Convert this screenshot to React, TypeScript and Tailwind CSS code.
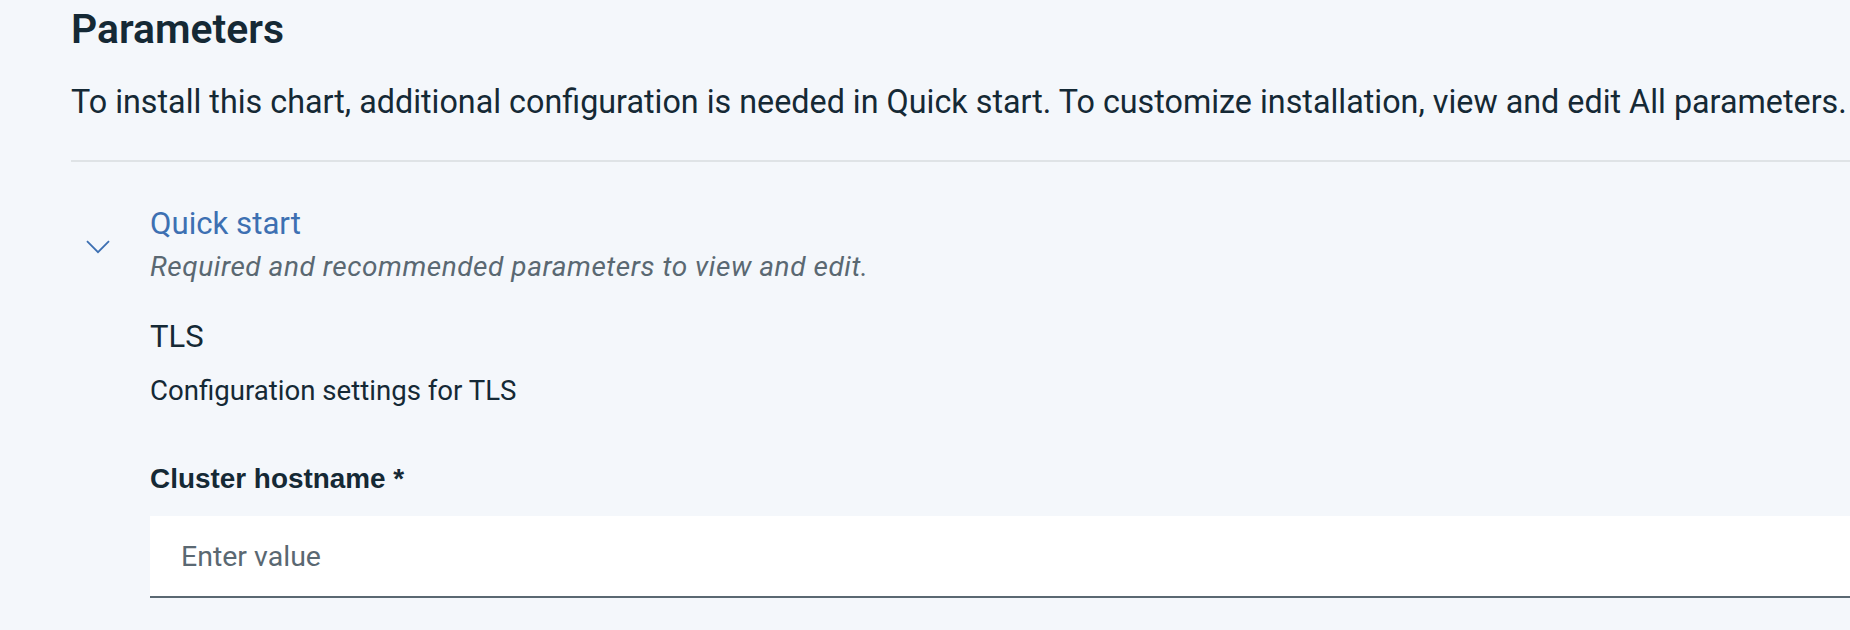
import React, { useState } from 'react';

const ChevronDown: React.FC<{ className?: string }> = ({ className }) => (
  <svg viewBox="0 0 24 14" width="24" height="14" fill="none" className={className}>
    <path d="M1 1.2 L12 12.2 L23 1.2" stroke="currentColor" strokeWidth="1.8" />
  </svg>
);

export default function App() {
  const [open, setOpen] = useState(true);
  const [hostname, setHostname] = useState('');

  return (
    <div
      className="min-h-screen bg-[#f4f7fb] pl-[71px] pt-[5px] text-[#152935] overflow-hidden"
      style={{ fontFamily: 'Roboto, "Noto Sans", sans-serif' }}
    >
      <h1 className="text-[40.9px] leading-[48px] font-semibold">Parameters</h1>
      <p className="mt-[29px] text-[32.3px] leading-[40px] whitespace-nowrap">
        To install this chart, additional configuration is needed in Quick start. To customize installation, view and
        edit All parameters.
      </p>

      <div className="mt-[38px] h-[2px] bg-[#dfe3e6]" />

      <section className="mt-[40px]">
        <div className="flex">
          <button
            type="button"
            onClick={() => setOpen(!open)}
            className="w-[79px] shrink-0 pl-[15px] pt-[38px] self-start text-[#3d70b2]"
            aria-label="Toggle Quick start"
          >
            <ChevronDown className={open ? '' : '-rotate-90'} />
          </button>
          <div>
            <h2 className="text-[31.2px] leading-[44px] text-[#3d70b2]">Quick start</h2>
            <p className="mt-[3px] text-[28px] leading-[36px] italic tracking-[0.55px] text-[#5a6872] whitespace-nowrap">
              Required and recommended parameters to view and edit.
            </p>
          </div>
        </div>

        {open && (
          <div className="pl-[79px]">
            <h3 className="mt-[32px] text-[31px] leading-[40px]">TLS</h3>
            <p className="mt-[16px] text-[27.6px] leading-[36px]">Configuration settings for TLS</p>

            <label
              htmlFor="cluster-hostname"
              className="block mt-[52px] text-[27.9px] leading-[36px] font-bold"
              style={{ fontFamily: '"Liberation Sans", Arial, sans-serif' }}
            >
              Cluster hostname *
            </label>
            <input
              id="cluster-hostname"
              value={hostname}
              onChange={(e) => setHostname(e.target.value)}
              placeholder="Enter value"
              className="mt-[19px] block w-full h-[82px] bg-white border-b-2 border-[#5a6872] pl-[31px] text-[28.5px] text-[#152935] placeholder:text-[#5a6872] outline-none"
            />
          </div>
        )}
      </section>
    </div>
  );
}
